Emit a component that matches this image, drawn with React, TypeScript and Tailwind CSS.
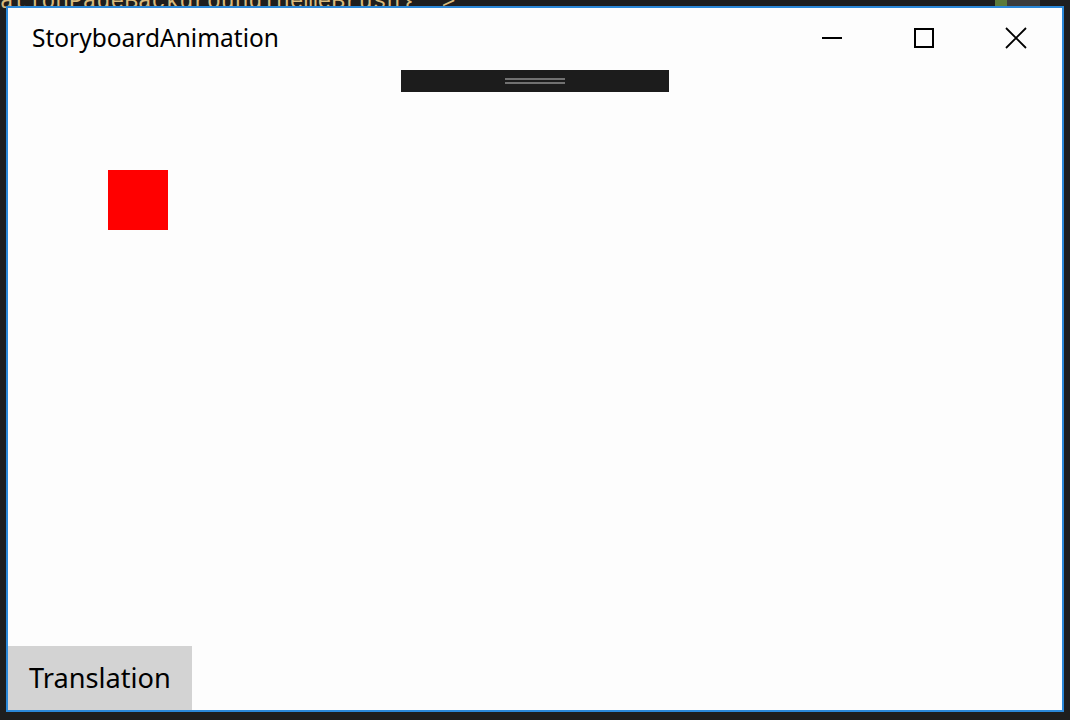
import React from 'react';

const font = { fontFamily: '"Noto Sans", "Open Sans", sans-serif' };

const TitleButton: React.FC<{ children: React.ReactNode }> = ({ children }) => (
  <div className="w-[92px] h-full flex items-center justify-center">{children}</div>
);

export default function App() {
  return (
    <div className="relative w-[1070px] h-[720px] bg-[#1e1e1e] overflow-hidden pt-[6px] pl-[6px]" style={font}>
      {/* editor text peeking behind the window */}
      <div
        className="absolute left-0 top-[-15px] text-[23px] text-[#d7ba7d] whitespace-nowrap"
        style={{ fontFamily: '"Liberation Mono", monospace' }}
      >
        {'ationPageBackgroundThemeBrush}" >'}
      </div>
      <div className="absolute left-[995px] top-0 w-[12px] h-[6px] bg-[#5b7a3a]" />
      <div className="absolute left-[1007px] top-0 w-[33px] h-[6px] bg-[#3c3c3c]" />

      {/* app window */}
      <div className="relative w-[1058px] h-[706px] border-2 border-[#2b88d8] bg-[#fdfdfd] flex flex-col">
        <div className="h-[60px] flex items-center shrink-0">
          <span className="pl-[24px] text-[24.5px] text-black">StoryboardAnimation</span>
          <div className="ml-auto flex h-full">
            <TitleButton>
              <div className="w-[20px] h-[2px] bg-black" />
            </TitleButton>
            <TitleButton>
              <div className="w-[20px] h-[20px] border-2 border-black" />
            </TitleButton>
            <TitleButton>
              <svg width="22" height="22" viewBox="0 0 22 22">
                <path d="M1 1L21 21M21 1L1 21" stroke="#000" strokeWidth="1.8" />
              </svg>
            </TitleButton>
          </div>
        </div>

        <div className="mt-[2px] mx-auto w-[268px] h-[22px] bg-[#1c1c1c] flex flex-col items-center justify-center gap-[2px]">
          <div className="w-[60px] h-[2px] bg-[#717171]" />
          <div className="w-[60px] h-[2px] bg-[#717171]" />
        </div>

        <div className="ml-[100px] mt-[78px] w-[60px] h-[60px] bg-[#ff0000]" />

        <button className="mt-auto w-[184px] h-[64px] bg-[#d3d3d3] text-[27.2px] text-black text-left pl-[21px]">
          Translation
        </button>
      </div>
    </div>
  );
}
